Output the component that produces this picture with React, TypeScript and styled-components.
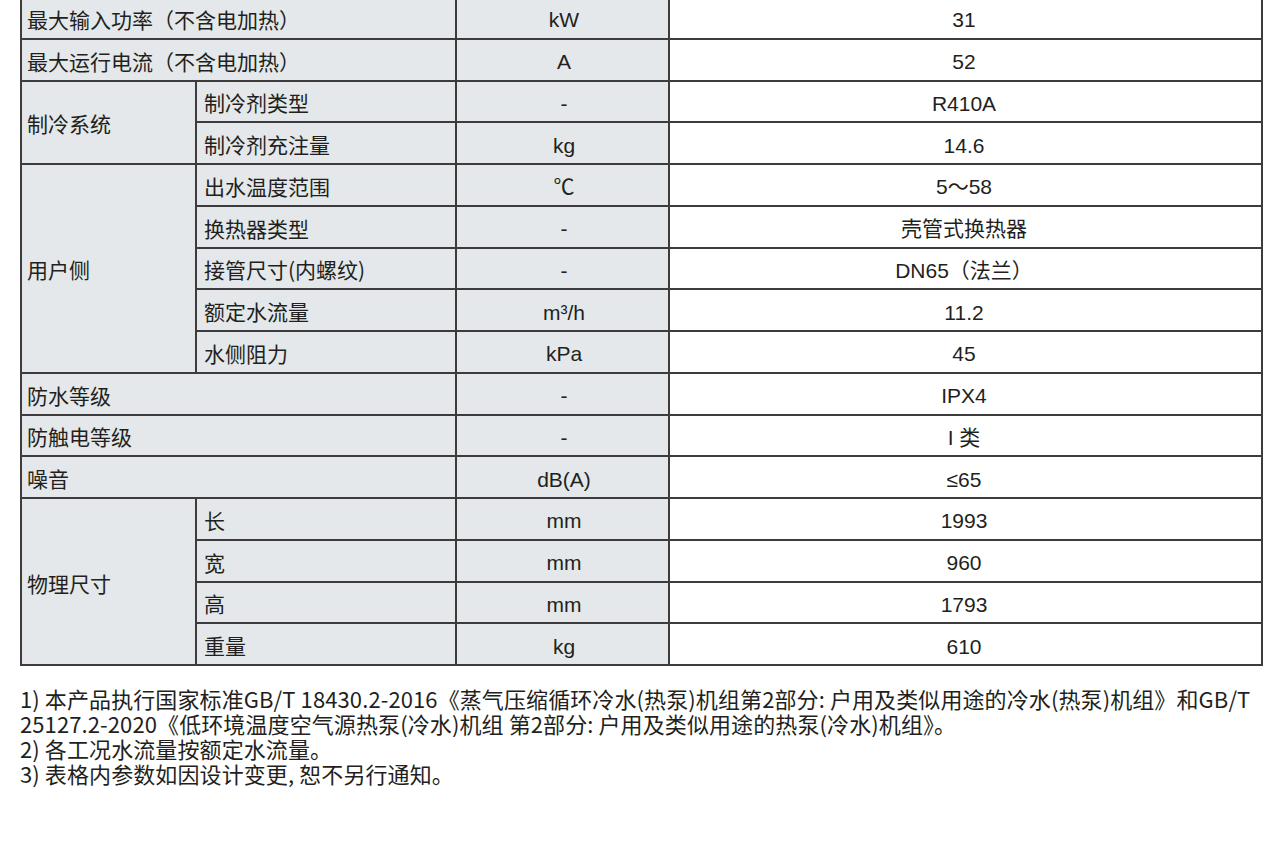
import React from 'react';
import styled, { createGlobalStyle } from 'styled-components';

type Row = {
  group?: string;
  span?: number;
  label: string;
  unit: string;
  value: string;
};

const rows: Row[] = [
  { label: '最大输入功率（不含电加热）', unit: 'kW', value: '31' },
  { label: '最大运行电流（不含电加热）', unit: 'A', value: '52' },
  { group: '制冷系统', span: 2, label: '制冷剂类型', unit: '-', value: 'R410A' },
  { label: '制冷剂充注量', unit: 'kg', value: '14.6' },
  { group: '用户侧', span: 5, label: '出水温度范围', unit: '℃', value: '5～58' },
  { label: '换热器类型', unit: '-', value: '壳管式换热器' },
  { label: '接管尺寸(内螺纹)', unit: '-', value: 'DN65（法兰）' },
  { label: '额定水流量', unit: 'm³/h', value: '11.2' },
  { label: '水侧阻力', unit: 'kPa', value: '45' },
  { label: '防水等级', unit: '-', value: 'IPX4' },
  { label: '防触电等级', unit: '-', value: 'I 类' },
  { label: '噪音', unit: 'dB(A)', value: '≤65' },
  { group: '物理尺寸', span: 4, label: '长', unit: 'mm', value: '1993' },
  { label: '宽', unit: 'mm', value: '960' },
  { label: '高', unit: 'mm', value: '1793' },
  { label: '重量', unit: 'kg', value: '610' },
];

// rows that sit inside a group (no own first cell)
const grouped = new Set([3, 5, 6, 7, 8, 13, 14, 15]);

export default function App() {
  return (
    <>
      <GlobalStyle />
      <Page>
        <SpecTable>
          <colgroup>
            <col style={{ width: 175 }} />
            <col style={{ width: 260 }} />
            <col style={{ width: 213 }} />
            <col />
          </colgroup>
          <tbody>
            {rows.map((r, i) => (
              <tr key={i}>
                {r.group ? (
                  <>
                    <LabelCell rowSpan={r.span}>{r.group}</LabelCell>
                    <LabelCell $sub>{r.label}</LabelCell>
                  </>
                ) : grouped.has(i) ? (
                  <LabelCell $sub>{r.label}</LabelCell>
                ) : (
                  <LabelCell colSpan={2}>{r.label}</LabelCell>
                )}
                <UnitCell>{r.unit}</UnitCell>
                <ValueCell>{r.value}</ValueCell>
              </tr>
            ))}
          </tbody>
        </SpecTable>
        <Notes>
          <Note>
            1) 本产品执行国家标准GB/T 18430.2-2016《蒸气压缩循环冷水(热泵)机组第2部分: 户用及类似用途的冷水(热泵)机组》和GB/T
          </Note>
          <Note>25127.2-2020《低环境温度空气源热泵(冷水)机组 第2部分: 户用及类似用途的热泵(冷水)机组》。</Note>
          <Note>2) 各工况水流量按额定水流量。</Note>
          <Note>3) 表格内参数如因设计变更, 恕不另行通知。</Note>
        </Notes>
      </Page>
    </>
  );
}

const GlobalStyle = createGlobalStyle`
  html, body {
    margin: 0;
    padding: 0;
    background: #fff;
    overflow: hidden;
  }
  body {
    font-family: "Noto Sans CJK SC", "Noto Sans", sans-serif;
    color: #231f20;
  }
`;

const Page = styled.div`
  width: 1280px;
  height: 856px;
  padding: 0 18px 0 20px;
  box-sizing: border-box;
  overflow: hidden;
`;

const SpecTable = styled.table`
  width: 1243px;
  margin-top: -4px;
  border-collapse: collapse;
  table-layout: fixed;

  tr {
    height: 41.75px;
  }

  td {
    border: 2px solid #3e3b3c;
    padding: 0;
    font-size: 21px;
    line-height: 1;
    vertical-align: middle;
  }
`;

const LabelCell = styled.td<{ $sub?: boolean }>`
  background: #e4e8ea;
  text-align: left;
  padding-left: ${(p) => (p.$sub ? '7px' : '5px')} !important;
  padding-top: 3px !important;
  font-family: "Noto Sans CJK SC", sans-serif;
  white-space: nowrap;
`;

const UnitCell = styled.td`
  background: #e4e8ea;
  text-align: center;
  padding-top: 4px !important;
  padding-left: 3px !important;
  font-family: "Liberation Sans", "Noto Sans CJK SC", sans-serif;
`;

const ValueCell = styled.td`
  background: #fff;
  text-align: center;
  padding-top: 4px !important;
  padding-right: 3px !important;
  font-family: "Liberation Sans", "Noto Sans CJK SC", sans-serif;
`;

const Notes = styled.div`
  margin-top: 20px;
  font-family: "Noto Sans CJK SC", sans-serif;
  font-size: 22px;
  line-height: 25px;
  letter-spacing: 0.1px;
  color: #231f20;
`;

const Note = styled.div`
  white-space: nowrap;
`;
